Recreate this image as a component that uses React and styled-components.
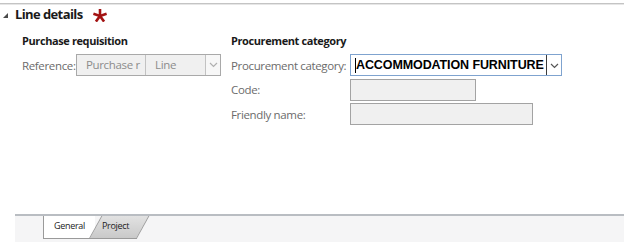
import React from 'react';
import styled, { createGlobalStyle } from 'styled-components';

const GlobalStyle = createGlobalStyle`
  html, body { margin: 0; padding: 0; background: #fff; }
  body { font-family: "Open Sans", "Noto Sans", sans-serif; }
`;

const Chevron = ({ color = '#8a8a8a' }) => (
  <svg width="9" height="6" viewBox="0 0 9 6">
    <path d="M1 1 L4.5 4.5 L8 1" fill="none" stroke={color} strokeWidth="1.2" />
  </svg>
);

// required-field marker: five armed asterisk
const RequiredMark = () => (
  <svg width="14" height="13" viewBox="0 0 15 14">
    <g stroke="#a31212" strokeWidth="2.8" strokeLinecap="butt">
      <line x1="7.5" y1="7.5" x2="7.5" y2="0" />
      <line x1="7.5" y1="7.5" x2="14.6" y2="5.2" />
      <line x1="7.5" y1="7.5" x2="0.4" y2="5.2" />
      <line x1="7.5" y1="7.5" x2="11.9" y2="13.6" />
      <line x1="7.5" y1="7.5" x2="3.1" y2="13.6" />
    </g>
  </svg>
);

const App = () => {
  return (
    <Page>
      <GlobalStyle />
      <TopRule />
      <Header>
        <Collapse />
        <Title>Line details</Title>
        <Star><RequiredMark /></Star>
      </Header>
      <Columns>
        <Group>
          <GroupTitle>Purchase requisition</GroupTitle>
          <Row>
            <Label width="54px">Reference:</Label>
            <RefBox>
              <RefCell width="69px">Purchase r</RefCell>
              <RefCell width="60px">Line</RefCell>
              <RefDrop><Chevron color="#b0b0b0" /></RefDrop>
            </RefBox>
          </Row>
        </Group>
        <Group>
          <GroupTitle>Procurement category</GroupTitle>
          <Fields>
            <Row>
              <Label width="119px">Procurement category:</Label>
              <ActiveInput>
                <Caret />
                <Value>ACCOMMODATION FURNITURE</Value>
                <DropButton><Chevron color="#555" /></DropButton>
              </ActiveInput>
            </Row>
            <Row>
              <Label width="119px">Code:</Label>
              <DisabledInput width="126px" />
            </Row>
            <Row>
              <Label width="119px">Friendly name:</Label>
              <DisabledInput width="183px" />
            </Row>
          </Fields>
        </Group>
      </Columns>
      <Spacer />
      <TabStrip>
        <Tab>General</Tab>
        <SlantTab>Project</SlantTab>
      </TabStrip>
    </Page>
  );
};

const Page = styled.div`
  width: 624px;
  height: 247px;
  display: flex;
  flex-direction: column;
  overflow: hidden;
`;

const TopRule = styled.div`
  margin-top: 3px;
  height: 1px;
  background: #c4c4c4;
  border-bottom: 1px solid #e6e6e6;
`;

const Header = styled.div`
  display: flex;
  align-items: center;
  height: 18px;
  padding-left: 3px;
`;

const Collapse = styled.div`
  width: 0;
  height: 0;
  border-left: 5px solid transparent;
  border-bottom: 5px solid #4a4a4a;
  margin-right: 7px;
  margin-top: 3px;
`;

const Title = styled.span`
  font-size: 13px;
  font-weight: 700;
  color: #1a1a1a;
  letter-spacing: -0.6px;
`;

const Star = styled.span`
  display: flex;
  margin-left: 10px;
  margin-top: 3px;
`;

const Columns = styled.div`
  display: grid;
  grid-template-columns: 209px 1fr;
  padding-left: 22px;
  margin-top: 9px;
`;

const Group = styled.div`
  display: flex;
  flex-direction: column;
`;

const GroupTitle = styled.div`
  font-size: 11px;
  font-weight: 700;
  color: #1a1a1a;
  letter-spacing: -0.4px;
  height: 17px;
  line-height: 17px;
  margin-bottom: 5px;
`;

const Fields = styled.div`
  display: flex;
  flex-direction: column;
  gap: 2.5px;
`;

const Row = styled.div`
  display: flex;
  align-items: center;
  height: 22px;
`;

const Label = styled.span`
  width: ${p => p.width};
  flex: none;
  font-size: 11.5px;
  color: #6b6b6b;
  letter-spacing: -0.35px;
  white-space: nowrap;
`;

const RefBox = styled.div`
  display: flex;
  height: 22px;
  box-sizing: border-box;
  border: 1px solid #a9a9a9;
  background: #f0f0f0;
`;

const RefCell = styled.div`
  width: ${p => p.width};
  box-sizing: border-box;
  border-right: 1px solid #c2c2c2;
  padding-left: 9px;
  font-size: 11.5px;
  color: #8c8c8c;
  letter-spacing: -0.35px;
  line-height: 20px;
  overflow: hidden;
  white-space: nowrap;
`;

const RefDrop = styled.div`
  width: 14px;
  display: flex;
  align-items: center;
  justify-content: center;
  background: #f7f7f7;
`;

const ActiveInput = styled.div`
  display: flex;
  align-items: center;
  width: 212px;
  height: 22px;
  box-sizing: border-box;
  border: 1px solid #7fa3cf;
  background: #fff;
  padding-left: 4px;
`;

const Caret = styled.div`
  width: 1px;
  height: 15px;
  background: #000;
`;

const Value = styled.span`
  flex: 1;
  font-family: "Liberation Sans", Arial, sans-serif;
  font-size: 12.5px;
  font-weight: 700;
  color: #000;
  letter-spacing: -0.1px;
  white-space: nowrap;
  overflow: hidden;
`;

const DropButton = styled.div`
  width: 15px;
  height: 20px;
  border-left: 1px solid #3c3c3c;
  display: flex;
  align-items: center;
  justify-content: center;
  box-sizing: border-box;
  padding-top: 2px;
`;

const DisabledInput = styled.div`
  width: ${p => p.width};
  height: 22px;
  box-sizing: border-box;
  border: 1px solid #a3a3a3;
  background: #f0f0f0;
`;

const Spacer = styled.div`
  flex: 1;
`;

const TabStrip = styled.div`
  display: flex;
  align-items: flex-start;
  margin-left: 15px;
  height: 26px;
  margin-bottom: 5px;
  border-top: 2px solid #b9bdc2;
  background: #f5f5f6;
  padding-left: 28px;
`;

const Tab = styled.div`
  position: relative;
  z-index: 1;
  width: 52px;
  height: 23px;
  box-sizing: border-box;
  border-left: 1px solid #9a9a9a;
  border-bottom: 1px solid #9a9a9a;
  background: #fff;
  font-size: 9px;
  color: #222;
  letter-spacing: -0.3px;
  padding-left: 10px;
  line-height: 19px;
`;

const SlantTab = styled.div`
  position: relative;
  width: 58px;
  height: 23px;
  margin-left: -10px;
  font-size: 9px;
  color: #222;
  letter-spacing: -0.3px;
  padding-left: 17px;
  line-height: 19px;
  box-sizing: border-box;
  z-index: 2;

  &::before {
    content: '';
    position: absolute;
    top: 0;
    bottom: 0;
    left: 10px;
    right: 0;
    border: 1px solid #9a9a9a;
    border-top: none;
    background: linear-gradient(#e2e2e2, #c9c9c9);
    transform: skewX(-29deg);
    z-index: -1;
  }
`;

export default App;
